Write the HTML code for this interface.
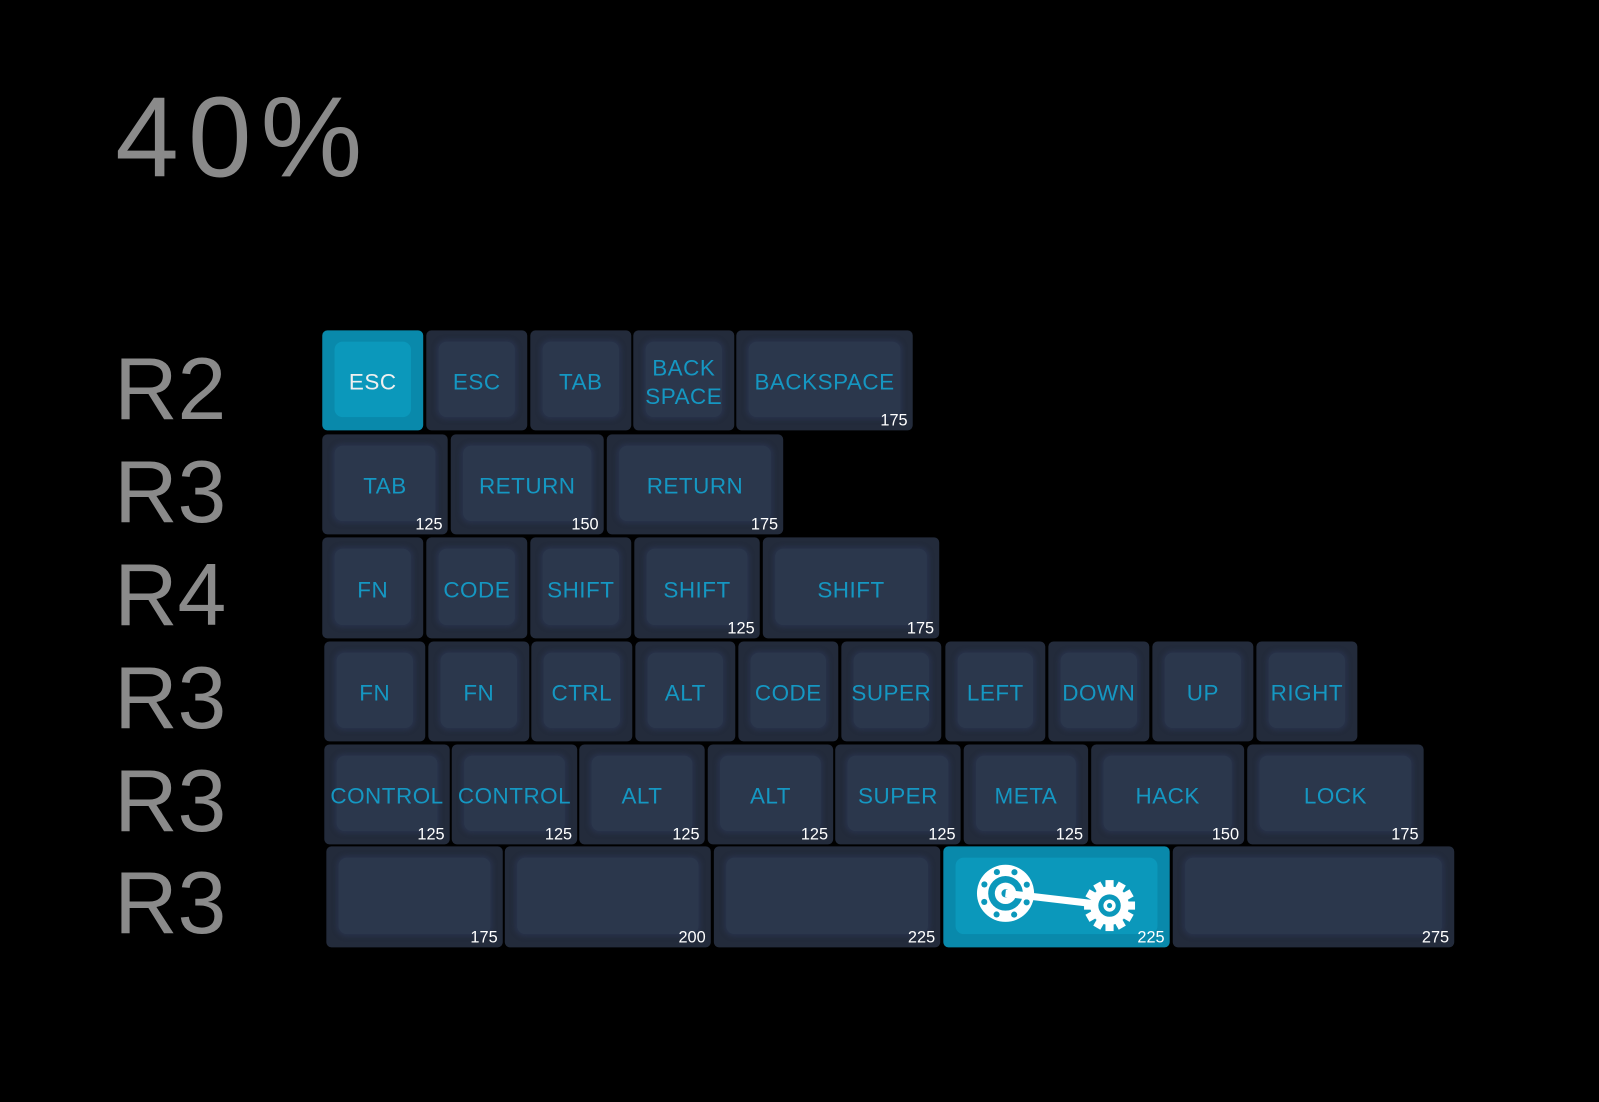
<!DOCTYPE html>
<html><head><meta charset="utf-8"><style>
body{margin:0;width:1599px;height:1102px;background:#000;position:relative;overflow:hidden;font-family:"Liberation Sans",sans-serif}
#w{position:absolute;left:0;top:0;width:1568px;height:1081px;transform:scale(1.0198);transform-origin:0 0}
.t{position:absolute;color:#8a8a8a;font-weight:normal}
.k{position:absolute;background:#232b3b;border-radius:5px}
.k .i{position:absolute;left:12px;right:12px;top:11px;bottom:13px;background:#2b374c;border-radius:8px;box-shadow:0 0 4px 2px #28324a}
.k .l{position:absolute;left:0;right:0;top:0;bottom:-4px;display:flex;align-items:center;justify-content:center;text-align:center;color:#1597c2;font-size:22px;line-height:28px;letter-spacing:0.5px}
.k .n{position:absolute;right:5px;bottom:0px;color:#fff;font-size:16px}
.k.a{background:#0989ab}.k.a .i{background:#0b98bb;box-shadow:none}.k.a .l{color:#f0f0f0}
</style></head><body><div id="w">
<div class="t" style="left:113px;top:70px;font-size:112px;letter-spacing:9px">40%</div>
<div class="t" style="left:112px;top:333px;font-size:86px">R2</div>
<div class="t" style="left:112px;top:434px;font-size:86px">R3</div>
<div class="t" style="left:112px;top:535px;font-size:86px">R4</div>
<div class="t" style="left:112px;top:636px;font-size:86px">R3</div>
<div class="t" style="left:112px;top:737px;font-size:86px">R3</div>
<div class="t" style="left:112px;top:837px;font-size:86px">R3</div>
<div id="kb"></div>
</div>
<script>
var rows=[
[324,422,[[316,415,"ESC","",1],[418,517,"ESC"],[520,619,"TAB"],[621,720,"BACK<br>SPACE"],[722,895,"BACKSPACE","175"]]],
[426,524,[[316,439,"TAB","125"],[442,592,"RETURN","150"],[595,768,"RETURN","175"]]],
[527,626,[[316,415,"FN"],[418,517,"CODE"],[520,619,"SHIFT"],[622,745,"SHIFT","125"],[748,921,"SHIFT","175"]]],
[629,727,[[318,417,"FN"],[420,519,"FN"],[521,620,"CTRL"],[623,721,"ALT"],[724,822,"CODE"],[825,923,"SUPER"],[927,1025,"LEFT"],[1028,1127,"DOWN"],[1130,1229,"UP"],[1232,1331,"RIGHT"]]],
[730,828,[[318,441,"CONTROL","125"],[443,566,"CONTROL","125"],[568,691,"ALT","125"],[694,817,"ALT","125"],[819,942,"SUPER","125"],[945,1067,"META","125"],[1070,1220,"HACK","150"],[1223,1396,"LOCK","175"]]],
[830,929,[[320,493,"","175"],[495,697,"","200"],[700,922,"","225"],[925,1147,"ICON","225",1],[1150,1426,"","275"]]]];
var icon='<svg width="170" height="74" viewBox="0 0 170 74" style="position:absolute;left:31px;top:16px"><circle cx="30" cy="30" r="28" fill="#fff"/><circle cx="30" cy="30" r="17" fill="#0b98bb"/><circle cx="30" cy="30" r="10.5" fill="#fff"/><circle cx="30" cy="30" r="4" fill="#0b98bb"/>'+
(function(){var s="";for(var i=0;i<8;i++){var a=i*Math.PI/4+0.4;s+='<circle cx="'+(30+22.5*Math.cos(a))+'" cy="'+(30+22.5*Math.sin(a))+'" r="3" fill="#0b98bb"/>';}
s+='<line x1="30" y1="30" x2="132" y2="42" stroke="#fff" stroke-width="7"/>';
for(var i=0;i<12;i++){s+='<rect x="128" y="17" width="8" height="9" fill="#fff" transform="rotate('+(i*30)+' 132 42)"/>';}
s+='<circle cx="132" cy="42" r="19" fill="#fff"/><circle cx="132" cy="42" r="11" fill="#0b98bb"/><circle cx="132" cy="42" r="6" fill="#fff"/><circle cx="132" cy="42" r="2.5" fill="#0b98bb"/>';return s;})()+'</svg>';
var h="";
rows.forEach(function(r){r[2].forEach(function(k){
h+='<div class="k'+(k[4]?' a':'')+'" style="left:'+k[0]+'px;top:'+r[0]+'px;width:'+(k[1]-k[0])+'px;height:'+(r[1]-r[0])+'px"><div class="i"></div>'+
(k[2]=="ICON"?icon:'<div class="l">'+k[2]+'</div>')+(k[3]?'<div class="n">'+k[3]+'</div>':'')+'</div>';});});
document.getElementById("kb").innerHTML=h;
</script>
</body></html>
